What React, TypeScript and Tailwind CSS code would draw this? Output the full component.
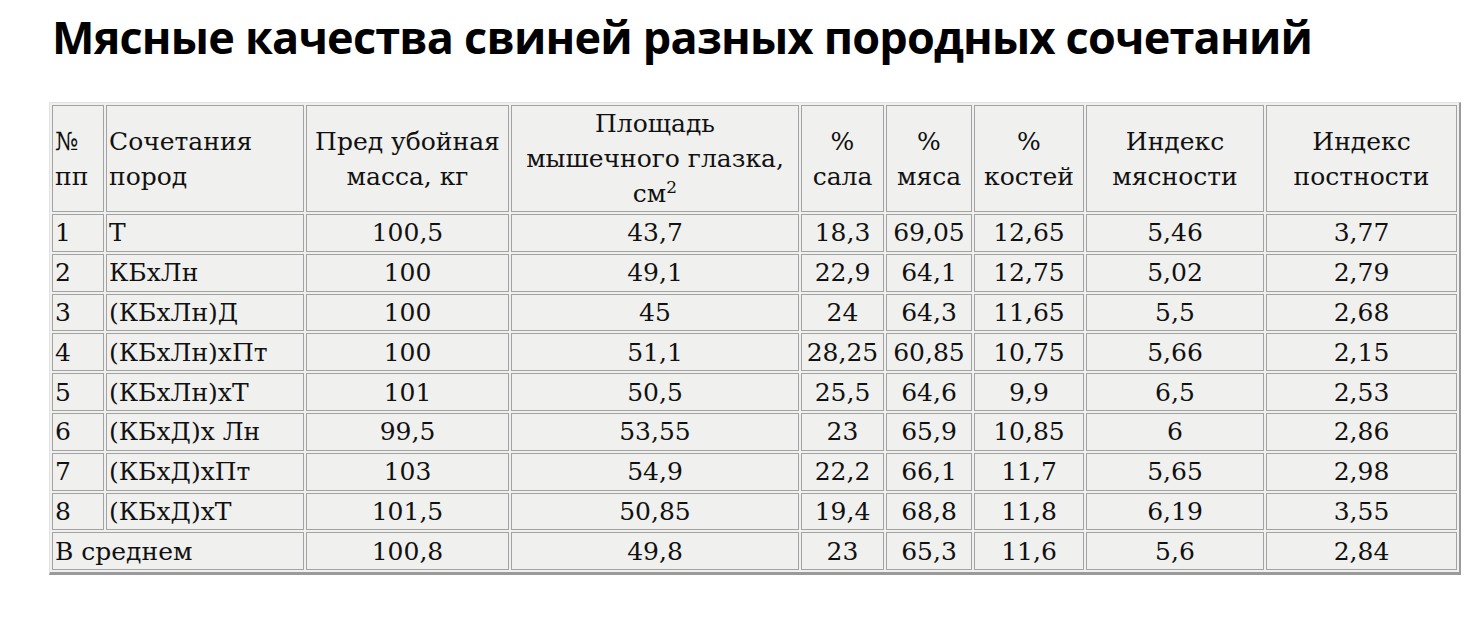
const headers = [
  { lines: ["№", "пп"], align: "text-left", w: "w-[52px]" },
  { lines: ["Сочетания", "пород"], align: "text-left", w: "w-[198px]" },
  { lines: ["Пред убойная", "масса, кг"], align: "text-center", w: "w-[203px]" },
  { lines: ["Площадь", "мышечного глазка,", "см"], align: "text-center", w: "w-[288px]", sup: true },
  { lines: ["%", "сала"], align: "text-center", w: "w-[83px]" },
  { lines: ["%", "мяса"], align: "text-center", w: "w-[86px]" },
  { lines: ["%", "костей"], align: "text-center", w: "w-[110px]" },
  { lines: ["Индекс", "мясности"], align: "text-center", w: "w-[178px]" },
  { lines: ["Индекс", "постности"], align: "text-center", w: "" },
];

const rows = [
  ["1", "Т", "100,5", "43,7", "18,3", "69,05", "12,65", "5,46", "3,77"],
  ["2", "КБхЛн", "100", "49,1", "22,9", "64,1", "12,75", "5,02", "2,79"],
  ["3", "(КБхЛн)Д", "100", "45", "24", "64,3", "11,65", "5,5", "2,68"],
  ["4", "(КБхЛн)хПт", "100", "51,1", "28,25", "60,85", "10,75", "5,66", "2,15"],
  ["5", "(КБхЛн)хТ", "101", "50,5", "25,5", "64,6", "9,9", "6,5", "2,53"],
  ["6", "(КБхД)х Лн", "99,5", "53,55", "23", "65,9", "10,85", "6", "2,86"],
  ["7", "(КБхД)хПт", "103", "54,9", "22,2", "66,1", "11,7", "5,65", "2,98"],
  ["8", "(КБхД)хТ", "101,5", "50,85", "19,4", "68,8", "11,8", "6,19", "3,55"],
];

const avg = ["100,8", "49,8", "23", "65,3", "11,6", "5,6", "2,84"];

const cell = "border border-[#a3a3a3] px-[2px] py-0 align-middle font-normal";

export default function App() {
  return (
    <div className="min-h-screen bg-white px-[49px] pt-[5px]">
      <h1 className="pl-[3px] font-['Open_Sans',sans-serif] text-[45px] font-bold leading-[64px] tracking-[-0.8px] text-black">
        Мясные качества свиней разных породных сочетаний
      </h1>

      <table className="mt-[33px] w-[1412px] table-fixed border-separate border-spacing-[2px] border-t-[1px] border-l-[1px] border-r-[2px] border-b-[3px] border-t-[#e2e2e2] border-l-[#e2e2e2] border-r-[#9a9a9a] border-b-[#9a9a9a] bg-[#f0f0ee] font-['DejaVu_Serif',serif] text-[25px] leading-[35px] text-[#111]">
        <thead>
          <tr className="h-[103px]">
            {headers.map((h, i) => (
              <th key={i} className={`${cell} ${h.align} ${h.w}`}>
                {h.lines.map((l, j) => (
                  <div key={j}>
                    {l}
                    {h.sup && j === h.lines.length - 1 && (
                      <span className="relative -top-[9px] text-[17px] leading-none">2</span>
                    )}
                  </div>
                ))}
              </th>
            ))}
          </tr>
        </thead>
        <tbody>
          {rows.map((r, i) => (
            <tr key={i} className="h-[37.8px]">
              {r.map((v, j) => (
                <td key={j} className={`${cell} ${j < 2 ? "text-left" : "text-center"}`}>
                  {v}
                </td>
              ))}
            </tr>
          ))}
          <tr className="h-[37.8px]">
            <td colSpan={2} className={`${cell} text-left`}>
              В среднем
            </td>
            {avg.map((v, j) => (
              <td key={j} className={`${cell} text-center`}>
                {v}
              </td>
            ))}
          </tr>
        </tbody>
      </table>
    </div>
  );
}
